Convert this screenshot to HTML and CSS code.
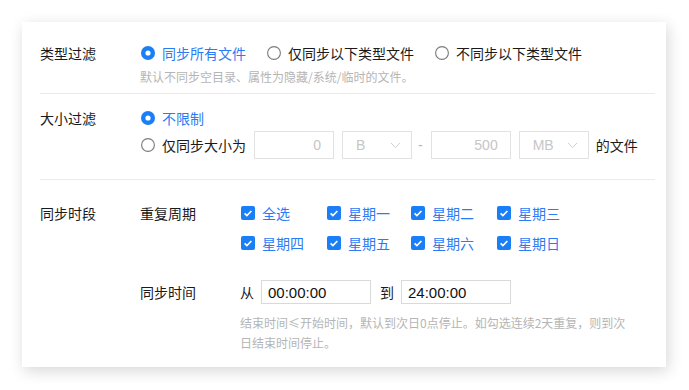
FILE: index.html
```html
<!DOCTYPE html>
<html>

<head lang="zh">
    <meta charset="UTF-8">
    <title>同步设置</title>
    <link rel="stylesheet" href="styles.css">
</head>

<body>
    <div class="card">
        <!-- 类型过滤 -->
        <div class="section section-type">
            <div class="section-label">类型过滤</div>
            <div class="section-body">
                <div class="options">
                    <span class="option checked">
                        <svg class="radio" width="14" height="14" viewBox="0 0 14 14"><circle cx="7" cy="7" r="7" fill="#1a7ff6"/><circle cx="7" cy="7" r="2.6" fill="#fff"/></svg>
                        同步所有文件</span>
                    <span class="option">
                        <svg class="radio" width="14" height="14" viewBox="0 0 14 14"><circle cx="7" cy="7" r="6.4" fill="none" stroke="#7a7a7a" stroke-width="1.1"/></svg>
                        仅同步以下类型文件</span>
                    <span class="option">
                        <svg class="radio" width="14" height="14" viewBox="0 0 14 14"><circle cx="7" cy="7" r="6.4" fill="none" stroke="#7a7a7a" stroke-width="1.1"/></svg>
                        不同步以下类型文件</span>
                </div>
                <div class="hint">默认不同步空目录、属性为隐藏/系统/临时的文件。</div>
            </div>
        </div>

        <!-- 大小过滤 -->
        <div class="section section-size">
            <div class="section-label">大小过滤</div>
            <div class="section-body">
                <div class="options">
                    <span class="option checked">
                        <svg class="radio" width="14" height="14" viewBox="0 0 14 14"><circle cx="7" cy="7" r="7" fill="#1a7ff6"/><circle cx="7" cy="7" r="2.6" fill="#fff"/></svg>
                        不限制</span>
                </div>
                <div class="size-row">
                    <span class="option">
                        <svg class="radio" width="14" height="14" viewBox="0 0 14 14"><circle cx="7" cy="7" r="6.4" fill="none" stroke="#7a7a7a" stroke-width="1.1"/></svg>
                        仅同步大小为</span>
                    <input class="size-input" type="text" placeholder="0">
                    <div class="unit">B
                        <svg width="11" height="7" viewBox="0 0 11 7"><path d="M1 1l4.5 4.5L10 1" fill="none" stroke="#cfcfcf" stroke-width="1"/></svg>
                    </div>
                    <span class="dash">-</span>
                    <input class="size-input" type="text" placeholder="500">
                    <div class="unit">MB
                        <svg width="11" height="7" viewBox="0 0 11 7"><path d="M1 1l4.5 4.5L10 1" fill="none" stroke="#cfcfcf" stroke-width="1"/></svg>
                    </div>
                    <span class="suffix">的文件</span>
                </div>
            </div>
        </div>

        <!-- 同步时段 -->
        <div class="section section-time">
            <div class="section-label">同步时段</div>
            <div class="section-body">
                <div class="sub-row">
                    <div class="sub-label">重复周期</div>
                    <div class="days">
                        <span class="day"><svg width="14" height="14" viewBox="0 0 14 14"><rect width="14" height="14" rx="2" fill="#1a7ff6"/><path d="M3.6 7.3l2.3 2.3 4.5-4.6" fill="none" stroke="#fff" stroke-width="1.7"/></svg>全选</span>
                        <span class="day"><svg width="14" height="14" viewBox="0 0 14 14"><rect width="14" height="14" rx="2" fill="#1a7ff6"/><path d="M3.6 7.3l2.3 2.3 4.5-4.6" fill="none" stroke="#fff" stroke-width="1.7"/></svg>星期一</span>
                        <span class="day"><svg width="14" height="14" viewBox="0 0 14 14"><rect width="14" height="14" rx="2" fill="#1a7ff6"/><path d="M3.6 7.3l2.3 2.3 4.5-4.6" fill="none" stroke="#fff" stroke-width="1.7"/></svg>星期二</span>
                        <span class="day"><svg width="14" height="14" viewBox="0 0 14 14"><rect width="14" height="14" rx="2" fill="#1a7ff6"/><path d="M3.6 7.3l2.3 2.3 4.5-4.6" fill="none" stroke="#fff" stroke-width="1.7"/></svg>星期三</span>
                        <span class="day"><svg width="14" height="14" viewBox="0 0 14 14"><rect width="14" height="14" rx="2" fill="#1a7ff6"/><path d="M3.6 7.3l2.3 2.3 4.5-4.6" fill="none" stroke="#fff" stroke-width="1.7"/></svg>星期四</span>
                        <span class="day"><svg width="14" height="14" viewBox="0 0 14 14"><rect width="14" height="14" rx="2" fill="#1a7ff6"/><path d="M3.6 7.3l2.3 2.3 4.5-4.6" fill="none" stroke="#fff" stroke-width="1.7"/></svg>星期五</span>
                        <span class="day"><svg width="14" height="14" viewBox="0 0 14 14"><rect width="14" height="14" rx="2" fill="#1a7ff6"/><path d="M3.6 7.3l2.3 2.3 4.5-4.6" fill="none" stroke="#fff" stroke-width="1.7"/></svg>星期六</span>
                        <span class="day"><svg width="14" height="14" viewBox="0 0 14 14"><rect width="14" height="14" rx="2" fill="#1a7ff6"/><path d="M3.6 7.3l2.3 2.3 4.5-4.6" fill="none" stroke="#fff" stroke-width="1.7"/></svg>星期日</span>
                    </div>
                </div>
                <div class="sub-row time-row">
                    <div class="sub-label">同步时间</div>
                    <span class="time-word">从</span>
                    <input class="time-input" type="text" value="00:00:00">
                    <span class="time-word to">到</span>
                    <input class="time-input" type="text" value="24:00:00">
                </div>
                <div class="hint time-hint">结束时间≤开始时间，默认到次日0点停止。如勾选连续2天重复，则到次日结束时间停止。</div>
            </div>
        </div>
    </div>
</body>

</html>
```

FILE: styles.css
```css
body {
    margin: 0;
    padding: 22px;
    background: #ffffff;
    font-family: "Noto Sans CJK SC", "Liberation Sans", sans-serif;
    font-size: 14px;
    color: #1a1a1a;
}

.card {
    width: 644px;
    box-sizing: border-box;
    padding: 0 11px 0 18px;
    background: #ffffff;
    box-shadow: 2px 4px 14px rgba(0, 0, 0, 0.16);
}

.section {
    display: flex;
}

.section-label {
    width: 100px;
    flex-shrink: 0;
    line-height: 20px;
}

.section-body {
    flex: 1;
}

.section-type {
    padding: 21px 0 7px 0;
    border-bottom: 1px solid #ebebeb;
}

.section-size {
    padding: 14px 0 20px 0;
    border-bottom: 1px solid #ebebeb;
}

.section-time {
    padding: 23px 0 14px 0;
}

.options {
    display: flex;
    align-items: center;
    height: 20px;
    gap: 20px;
}

.option {
    display: flex;
    align-items: center;
    gap: 7px;
    line-height: 20px;
    white-space: nowrap;
}

.option .radio {
    margin-left: 1px;
}

.option.checked {
    color: #2a7cf4;
}

.hint {
    margin-top: 5px;
    font-size: 12px;
    line-height: 18px;
    color: #b5b5b5;
}

/* 大小过滤 */
.size-row {
    display: flex;
    align-items: center;
    height: 28px;
    margin-top: 3px;
}

.size-input {
    width: 80px;
    height: 28px;
    box-sizing: border-box;
    margin: 0 0 0 8px;
    padding: 0 12px;
    border: 1px solid #e2e2e2;
    text-align: right;
    font-family: "Liberation Sans", sans-serif;
    font-size: 14px;
    outline: none;
}

.size-input::placeholder {
    color: #c6c6c6;
}

.unit {
    width: 70px;
    height: 28px;
    box-sizing: border-box;
    margin-left: 8px;
    padding: 0 10px 0 13px;
    border: 1px solid #e2e2e2;
    display: flex;
    align-items: center;
    justify-content: space-between;
    font-family: "Liberation Sans", sans-serif;
    color: #c6c6c6;
}

.dash {
    margin: 0 0 0 6px;
    color: #b5b5b5;
    font-family: "Liberation Sans", sans-serif;
}

.suffix {
    margin-left: 7px;
}

/* 同步时段 */
.sub-row {
    display: flex;
    align-items: flex-start;
}

.sub-label {
    width: 100px;
    flex-shrink: 0;
    line-height: 20px;
}

.days {
    display: grid;
    grid-template-columns: 86px 84px 86px 86px;
    row-gap: 10px;
    margin-left: 1px;
}

.day {
    display: flex;
    align-items: center;
    gap: 7px;
    height: 20px;
    color: #2a7cf4;
    white-space: nowrap;
}

.time-row {
    align-items: center;
    height: 24px;
    margin-top: 27px;
}

.time-word {
    line-height: 24px;
}

.time-word.to {
    margin-left: 9px;
}

.time-input {
    width: 110px;
    height: 24px;
    box-sizing: border-box;
    margin-left: 7px;
    padding: 0 6px;
    border: 1px solid #d9d9d9;
    font-family: "Liberation Sans", sans-serif;
    font-size: 15px;
    color: #111;
    outline: none;
}

.time-hint {
    margin: 9px 0 0 100px;
    max-width: 390px;
    line-height: 20px;
}
```
